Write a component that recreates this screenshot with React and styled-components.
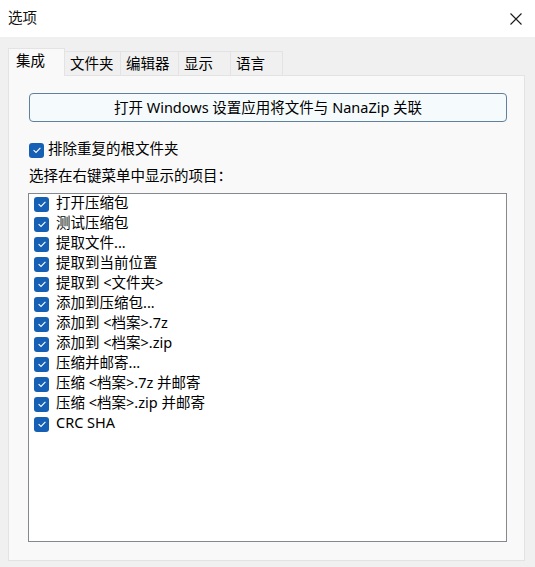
import styled, { createGlobalStyle } from 'styled-components'

const GlobalStyle = createGlobalStyle`
	html, body {
		margin: 0;
		padding: 0;
		background: #f0f0f0;
	}
	body {
		font-family: 'Noto Sans', 'Noto Sans CJK SC', sans-serif;
		font-size: 14.5px;
		color: #111;
	}
`

const tabs = [
	{ name: '集成', width: 57 },
	{ name: '文件夹', width: 57 },
	{ name: '编辑器', width: 59 },
	{ name: '显示', width: 53 },
	{ name: '语言', width: 53 },
]

const items = [
	'打开压缩包',
	'测试压缩包',
	'提取文件...',
	'提取到当前位置',
	'提取到 <文件夹>',
	'添加到压缩包...',
	'添加到 <档案>.7z',
	'添加到 <档案>.zip',
	'压缩并邮寄...',
	'压缩 <档案>.7z 并邮寄',
	'压缩 <档案>.zip 并邮寄',
	'CRC SHA',
]

const Window = styled.div`
	width: 535px;
	height: 567px;
	display: flex;
	flex-direction: column;
	background: #f0f0f0;
	overflow: hidden;
`

const TitleBar = styled.div`
	height: 37px;
	flex: none;
	background: #fff;
	display: flex;
	align-items: center;
	justify-content: space-between;
	padding: 0 13px 3px 8px;
	box-sizing: border-box;
	line-height: 20px;
`

const CloseIcon = styled.svg`
	width: 12px;
	height: 12px;
	margin-top: 3px;
`

const Body = styled.div`
	flex: 1;
	display: flex;
	flex-direction: column;
	padding: 12px 10px 6px 8px;
`

const TabRow = styled.div`
	display: flex;
	align-items: flex-end;
	height: 27px;
	flex: none;
	position: relative;
	z-index: 1;
`

const Tab = styled.div`
	box-sizing: border-box;
	width: ${(p) => p.$w}px;
	height: ${(p) => (p.$active ? 28 : 25)}px;
	padding-left: ${(p) => (p.$active ? 7 : 5)}px;
	line-height: ${(p) => (p.$active ? 23 : 22)}px;
	background: ${(p) => (p.$active ? '#f9f9f9' : '#f0f0f0')};
	border: 1px solid #e3e3e3;
	border-bottom: ${(p) => (p.$active ? 'none' : '1px solid #e3e3e3')};
	margin-left: ${(p) => (p.$active ? 0 : -1)}px;
	white-space: nowrap;
	color: #000;
`

const Panel = styled.div`
	flex: 1;
	box-sizing: border-box;
	background: #f9f9f9;
	border: 1px solid #e3e3e3;
	margin-top: -1px;
	padding: 17px 17px 18px 20px;
	display: flex;
	flex-direction: column;
`

const WideButton = styled.div`
	box-sizing: border-box;
	height: 29px;
	padding-bottom: 2px;
	border: 1px solid #60809c;
	border-radius: 4px;
	background: #f5fbfd;
	display: flex;
	align-items: center;
	justify-content: center;
	color: #000;
	flex: none;
`

const CheckRow = styled.div`
	display: flex;
	align-items: center;
	gap: ${(p) => p.$gap || 5}px;
	height: 20px;
	line-height: 20px;
	white-space: nowrap;
	color: #000;
`

const RowText = styled.span`
	position: relative;
	top: -2px;
`

const Box = styled.span`
	width: 15px;
	height: 15px;
	border-radius: 3px;
	background: #1560b4;
	display: flex;
	align-items: center;
	justify-content: center;
	flex: none;
`

const Label = styled.div`
	height: 20px;
	line-height: 18px;
	margin: 6px 0 7px 0;
	color: #000;
`

const ListBox = styled.div`
	flex: 1;
	box-sizing: border-box;
	margin-left: -1px;
	border: 1px solid #85888e;
	background: #fff;
	padding: 0 5px;
	display: flex;
	flex-direction: column;
`

function Check() {
	return (
		<Box>
			<svg width='10' height='10' viewBox='0 0 10 10'>
				<path d='M1.6 5.2 L4 7.4 L8.4 2.8' fill='none' stroke='#fff' strokeWidth='1.1' />
			</svg>
		</Box>
	)
}

export default function App() {
	return (
		<>
			<GlobalStyle />
			<Window>
				<TitleBar>
					<span>选项</span>
					<CloseIcon viewBox='0 0 12 12'>
						<path d='M0.5 0.5 L11.5 11.5 M11.5 0.5 L0.5 11.5' stroke='#1a1a1a' strokeWidth='1.1' />
					</CloseIcon>
				</TitleBar>
				<Body>
					<TabRow>
						{tabs.map((t, i) => (
							<Tab key={t.name} $w={t.width} $active={i === 0}>
								{t.name}
							</Tab>
						))}
					</TabRow>
					<Panel>
						<WideButton>打开 Windows 设置应用将文件与 NanaZip 关联</WideButton>
						<CheckRow $gap={4} style={{ marginTop: 18 }}>
							<Check />
							<RowText>排除重复的根文件夹</RowText>
						</CheckRow>
						<Label>选择在右键菜单中显示的项目：</Label>
						<ListBox>
							{items.map((it) => (
								<CheckRow key={it} $gap={7}>
									<Check />
									<RowText>{it}</RowText>
								</CheckRow>
							))}
						</ListBox>
					</Panel>
				</Body>
			</Window>
		</>
	)
}
